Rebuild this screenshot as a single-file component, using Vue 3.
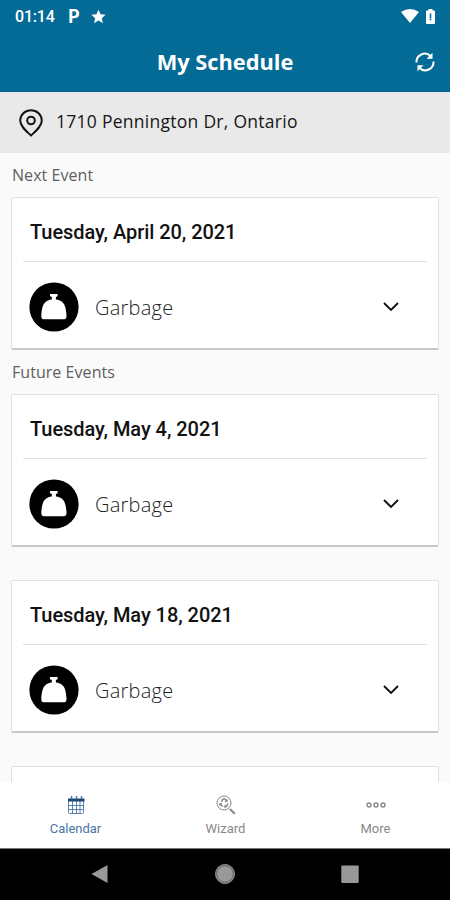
<template>
  <div class="screen">
    <header class="header">
      <div class="status-bar">
        <span class="clock">01:14</span>
        <span class="status-p">P</span>
        <svg class="status-star" viewBox="0 0 24 24" fill="currentColor"><path d="M12 1l3.300 7.500 8.100.8-6.100 5.400 1.800 8L12 18.500l-7.100 4.200 1.800-8L.6 9.300l8.100-.8z"/></svg>
        <svg class="status-wifi" viewBox="0 0 18 14" fill="currentColor"><path d="M0 3Q9-3 18 3L9 14z"/></svg>
        <svg class="status-battery" viewBox="0 0 9 15"><path d="M2.500 0h4v1.500H8q1 0 1 1V14q0 1-1 1H1q-1 0-1-1V2.500q0-1 1-1h1.500z" fill="currentColor"/><path d="M4.500 4.500v5M4.500 10v1.300" stroke="#046a96" stroke-width="1.600"/></svg>
      </div>
      <div class="title-bar">
        <h1 class="title">My Schedule</h1>
        <button class="refresh" aria-label="Refresh">
          <svg viewBox="0 0 20 20" fill="none" stroke="currentColor" stroke-width="2">
            <path d="M1.500 10.500A8.300 8.300 0 0 1 15.500 4M18.500 9.500A8.300 8.300 0 0 1 4.500 16"/>
            <path d="M17.500.8v6h-6zM2.500 19.200v-6h6z" fill="currentColor" stroke="none"/>
          </svg>
        </button>
      </div>
    </header>

    <div class="address">
      <svg class="pin" viewBox="0 0 24 28" fill="none" stroke="currentColor" stroke-width="2">
        <path d="M12 26.500C7 21.800 1.200 17.200 1.200 11.500a10.800 10.300 0 0 1 21.600 0c0 5.700-5.800 10.300-10.800 15z"/>
        <circle cx="12" cy="11.500" r="3.800"/>
      </svg>
      <span class="address-text">1710 Pennington Dr, Ontario</span>
    </div>

    <main class="schedule">
      <section v-for="section in sections" :key="section.label" class="section">
        <h2 class="section-label">{{ section.label }}</h2>
        <article v-for="event in section.events" :key="event.date" class="card">
          <div class="card-date">{{ event.date }}</div>
          <div class="card-row">
            <svg class="bag" viewBox="0 0 50 50">
              <circle cx="25" cy="25" r="24.600" fill="#000"/>
              <path d="M21 12h7.600v2.200l-1.700.8v2.600c2.800.3 5.100 1.200 6.800 2.800 2.500 2.400 3.200 6.300 3.800 12.600q.2 4.200-2.200 4.200H14.500q-2.400 0-2.200-4.200c.6-6.300 1.300-10.200 3.800-12.600 1.700-1.600 3.900-2.500 6.700-2.800V15l-1.800-.8z" fill="#fff"/>
            </svg>
            <span class="card-type">{{ event.type }}</span>
            <svg class="chevron" viewBox="0 0 16 10" fill="none" stroke="currentColor" stroke-width="1.900"><path d="M1 1l7 7 7-7"/></svg>
          </div>
        </article>
      </section>
      <div class="card"></div>
    </main>

    <nav class="tabs">
      <a class="tab tab--active">
        <svg class="tab-icon" viewBox="0 0 20 20" fill="none" stroke="currentColor">
          <path d="M2.500 6v11.500q0 1 1 1h13q1 0 1-1V6M2.500 10.500h15M2.500 14.500h15M6.500 6v12.500M10.500 6v12.500M14 6v12.500" stroke-width=".9"/>
          <path d="M2 5h16.500" stroke="#1d4577" stroke-width="3"/>
          <path d="M5.500 1v3M10.500 1v3M15.500 1v3" stroke-width="1.500"/>
        </svg>
        <span>Calendar</span>
      </a>
      <a class="tab">
        <svg class="tab-icon" viewBox="0 0 20 20" fill="none" stroke="currentColor">
          <circle cx="8" cy="8" r="7"/>
          <path d="M5.300 6.800L7 4h2.200l1.600 2.600M12 8.500l-1.500 3H8.500M6.500 11.500L4 9" stroke-width="1.500"/>
          <path d="M8.800 6.600h2.300V4.300M9.700 9.700l-1.500 1.800 1.500 1.700M3.700 10.800V8.600H6"/>
          <path d="M13.800 14l5 4.700" stroke-width="2.200"/>
        </svg>
        <span>Wizard</span>
      </a>
      <a class="tab">
        <svg class="tab-icon" viewBox="0 0 20 20" fill="none" stroke="currentColor" stroke-width="1.400"><circle cx="3" cy="10" r="2"/><circle cx="10" cy="10" r="2"/><circle cx="17" cy="10" r="2"/></svg>
        <span>More</span>
      </a>
    </nav>

    <footer class="system-nav">
      <svg viewBox="0 0 22 22" fill="#999"><path d="M2.500 10L18.500 1v18z"/></svg>
      <svg viewBox="0 0 22 22"><circle cx="11" cy="10" r="9.500" fill="#999" stroke="#8a8a8a"/><circle cx="11" cy="10" r="8.300" fill="none" stroke="#555" stroke-width=".8"/></svg>
      <svg viewBox="0 0 22 22" fill="#999"><rect x="2.300" y="1.500" width="17.400" height="17.400" rx="1"/></svg>
    </footer>
  </div>
</template>

<script setup>
const sections = [
  {
    label: 'Next Event',
    events: [{ date: 'Tuesday, April 20, 2021', type: 'Garbage' }],
  },
  {
    label: 'Future Events',
    events: [
      { date: 'Tuesday, May 4, 2021', type: 'Garbage' },
      { date: 'Tuesday, May 18, 2021', type: 'Garbage' },
    ],
  },
]
</script>

<style>
body {
  margin: 0;
}
</style>

<style scoped>
.screen {
  display: flex;
  flex-direction: column;
  width: 450px;
  height: 900px;
  overflow: hidden;
  background: #fafafa;
  font-family: 'Open Sans', 'Noto Sans', sans-serif;
}

.header {
  flex: none;
  height: 92px;
  box-sizing: border-box;
  border-bottom: 1px solid #03608a;
  background: #046a96;
  color: #fff;
}

/* Status bar */
.status-bar {
  display: flex;
  align-items: center;
  height: 32px;
  padding: 0 15px;
}

.clock {
  width: 53px;
  font-family: Roboto, sans-serif;
  font-size: 16px;
  font-weight: 500;
  letter-spacing: -0.2px;
}

.status-p {
  width: 23px;
  font-family: Lato, sans-serif;
  font-size: 18px;
  font-weight: 900;
}

.status-star { width: 15px; height: 15px; }
.status-wifi { width: 18px; height: 14px; margin-left: auto; }
.status-battery { width: 9px; height: 15px; margin-left: 7px; }

.title-bar {
  display: grid;
  grid-template-columns: 1fr auto 1fr;
  align-items: center;
  height: 60px;
  padding: 0 15px;
}

.title {
  grid-column: 2;
  margin: 0;
  font-size: 21.8px;
  font-weight: 700;
  line-height: 30px;
}

.refresh {
  justify-self: end;
  width: 20px;
  height: 20px;
  padding: 0;
  border: none;
  background: none;
  color: #fff;
}

.refresh svg { display: block; }

/* Address */
.address {
  display: flex;
  flex: none;
  align-items: center;
  height: 61px;
  box-sizing: border-box;
  padding-left: 19px;
  background: #e9e9e9;
  color: #161616;
}

.pin { width: 24px; height: 28px; }

.address-text {
  margin: -3px 0 0 13px;
  font-size: 17.5px;
  letter-spacing: 0.27px;
}

/* Event list */
.schedule {
  flex: 1;
  min-height: 0;
  padding: 0 11px;
  overflow: hidden;
}

.section-label {
  display: flex;
  align-items: center;
  height: 44px;
  margin: 0;
  padding-left: 1px;
  color: #606060;
  font-size: 16px;
  font-weight: 400;
  letter-spacing: 0.05px;
}

.card {
  height: 153px;
  box-sizing: border-box;
  padding: 0 11px;
  border: 1px solid #e0e0e0;
  border-bottom: 2px solid #c8c8c8;
  border-radius: 2px;
  background: #fff;
}

.card + .card,
.section + .card { margin-top: 33px; }

.card-date {
  display: flex;
  align-items: center;
  height: 64px;
  padding: 5px 7px 0;
  box-sizing: border-box;
  border-bottom: 1px solid #e0e0e0;
  color: #111;
  font-family: Roboto, sans-serif;
  font-size: 20px;
  font-weight: 500;
  letter-spacing: -0.05px;
}

.card-row {
  display: flex;
  align-items: center;
  height: 90px;
  padding: 0 28px 0 6px;
}

.bag { width: 50px; height: 50px; }

.card-type {
  flex: 1;
  margin-left: 16px;
  color: #222;
  font-size: 20px;
  font-weight: 300;
  letter-spacing: 0.25px;
}

.chevron { width: 16px; height: 10px; color: #111; }

/* Bottom tabs */
.tabs {
  display: flex;
  flex: none;
  height: 66px;
  background: #fff;
}

.tab {
  display: flex;
  flex: 1;
  flex-direction: column;
  align-items: center;
  padding: 13px 0 0 1px;
  box-sizing: border-box;
  color: #888;
  font-family: Roboto, sans-serif;
  font-size: 13px;
  line-height: 16px;
}

.tab-icon { width: 20px; height: 20px; margin-bottom: 6px; }

.tab--active { color: #4a75a8; }

/* Android navigation */
.system-nav {
  display: flex;
  flex: none;
  align-items: center;
  justify-content: space-between;
  height: 52px;
  box-sizing: border-box;
  padding: 0 89px;
  border-top: 1px solid #777;
  background: #000;
}

.system-nav svg { width: 22px; height: 22px; }
</style>
